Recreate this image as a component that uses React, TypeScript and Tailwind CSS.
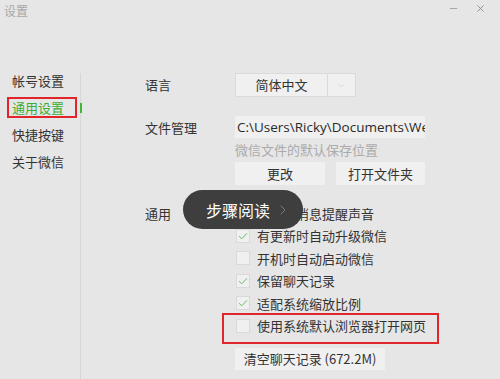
import { ChevronDown, ChevronRight, Minus, X } from "lucide-react"

const font = { fontFamily: '"Noto Sans CJK SC", "Noto Sans", sans-serif' }

const navItems = ["帐号设置", "通用设置", "快捷按键", "关于微信"]

const options = [
  { label: "开启新消息提醒声音", checked: true },
  { label: "有更新时自动升级微信", checked: true },
  { label: "开机时自动启动微信", checked: false },
  { label: "保留聊天记录", checked: true },
  { label: "适配系统缩放比例", checked: true },
  { label: "使用系统默认浏览器打开网页", checked: false },
]

function Check({ checked }: { checked: boolean }) {
  return (
    <div className="w-[14px] h-[14px] bg-[#f0f0f0] border border-[#d9d9d9] flex items-center justify-center">
      {checked && (
        <svg width="10" height="8" viewBox="0 0 10 8" fill="none">
          <path d="M1 4.2 L3.8 6.8 L9 1.2" stroke="#6cbd6c" strokeWidth="1" />
        </svg>
      )}
    </div>
  )
}

export default function App() {
  return (
    <div className="w-[500px] h-[379px] bg-[#e6e6e6] relative overflow-hidden text-[#333] text-[13px]" style={font}>
      {/* title bar */}
      <div className="flex items-start justify-between h-[67px]">
        <div className="pl-[4px] pt-[2px] text-[12px] text-[#a8a8a8]">设置</div>
        <div className="flex items-center gap-[16px] pr-[14px] pt-[3px] text-[#8a8a8a]">
          <Minus size={11} strokeWidth={1.5} />
          <X size={11} strokeWidth={2} />
        </div>
      </div>

      <div className="flex h-[312px]">
        {/* sidebar */}
        <div className="w-[80px] flex flex-col">
          {navItems.map((item, i) => (
            <div key={item} className="h-[27px] flex items-center">
              {i === 1 ? (
                <div className="ml-[7px] h-[21px] w-[70px] border-2 border-[#e0262b] flex items-center pl-[3px] text-[#3aae36]">
                  {item}
                </div>
              ) : (
                <div className="pl-[12px]">{item}</div>
              )}
            </div>
          ))}
        </div>
        <div className="w-[2px] mt-[6px] flex flex-col">
          <div className="h-[30px] w-px bg-[#d6d6d6]" />
          <div className="h-[10px] w-[2px] bg-[#3fb83a]" />
          <div className="flex-1 w-px bg-[#d6d6d6]" />
        </div>

        {/* main */}
        <div className="flex-1 pl-[63px] pt-[6px]">
          <div className="flex items-center h-[24px]">
            <div className="w-[90px]">语言</div>
            <div className="flex h-[24px] border border-[#dadada] bg-[#f0f0f0]">
              <div className="w-[92px] flex items-center justify-center border-r border-[#dadada]">简体中文</div>
              <div className="w-[27px] flex items-center justify-center text-[#c4c4c4]">
                <ChevronDown size={11} strokeWidth={1.2} />
              </div>
            </div>
          </div>

          <div className="flex mt-[19px]">
            <div className="w-[90px] pt-[2px]">文件管理</div>
            <div className="flex flex-col">
              <div
                className="w-[190px] h-[22px] bg-[#f0f0f0] flex items-center pl-[2px] overflow-hidden whitespace-nowrap text-[13.5px] text-[#2a2a2a]"
                style={{ fontFamily: '"Open Sans", "Noto Sans", sans-serif' }}
              >
                C:\Users\Ricky\Documents\WeChat Files
              </div>
              <div className="mt-[4px] text-[#ababab] leading-[16px]">微信文件的默认保存位置</div>
              <div className="flex gap-[11px] mt-[4px]">
                <div className="w-[90px] h-[23px] bg-[#f0f0f0] flex items-center justify-center">更改</div>
                <div className="w-[89px] h-[23px] bg-[#f0f0f0] flex items-center justify-center">打开文件夹</div>
              </div>
            </div>
          </div>

          <div className="flex mt-[17px]">
            <div className="w-[90px] h-[22.5px] flex items-center">通用</div>
            <div className="flex flex-col">
              {options.map((o, i) => (
                <div
                  key={o.label}
                  className={
                    i === 5
                      ? "h-[22.5px] flex items-center relative"
                      : "h-[22.5px] flex items-center"
                  }
                >
                  {i === 5 && (
                    <div className="absolute left-[-13px] top-[-2px] w-[217px] h-[31px] border-2 border-[#e0262b]" />
                  )}
                  <div className="pl-[1px]">
                    <Check checked={o.checked} />
                  </div>
                  <div className="pl-[7px]">{o.label}</div>
                </div>
              ))}
              <div className="mt-[11px] w-[150px] h-[22px] bg-[#f0f0f0] flex items-center justify-center">
                清空聊天记录 (672.2M)
              </div>
            </div>
          </div>
        </div>
      </div>

      {/* step tooltip overlay */}
      <div className="absolute left-[183px] top-[190px] w-[120px] h-[39px] rounded-full bg-[#3e3e3e] flex items-center pl-[23px] text-white text-[16px]">
        步骤阅读
        <ChevronRight size={16} strokeWidth={1} className="ml-[5px] text-[#9a9a9a]" />
      </div>
    </div>
  )
}
